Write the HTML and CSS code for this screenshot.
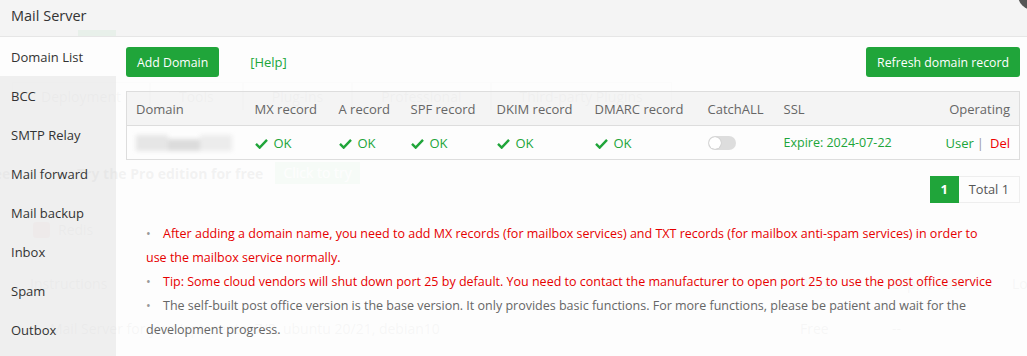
FILE: index.html
```html
<!DOCTYPE html>
<html lang="en">
<head>
    <meta charset="UTF-8">
    <meta name="viewport" content="width=device-width, initial-scale=1.0">
    <title>Mail Server</title>
    <link rel="stylesheet" href="styles.css">
</head>
<body>
    <div class="page">
        <div class="page-top">
            <span class="search-btn">
                <svg width="18" height="18" viewBox="0 0 18 18"><circle cx="8" cy="8" r="5.5" fill="none" stroke="#fff" stroke-width="1.6"/><path d="M12 12l4 4" stroke="#fff" stroke-width="1.6"/></svg>
            </span>
        </div>
        <div class="tabs">
            <span class="tab tab-first">Deployment</span>
            <span class="tab">Tools</span>
            <span class="tab">Plug-ins</span>
            <span class="tab">Professional</span>
            <span class="tab">Third-party Plugins</span>
        </div>
        <div class="promo">
            <span class="promo-pre">free</span>
            <b>Try the Pro edition for free</b>
            <span class="try-btn">Click to try</span>
        </div>
        <div class="soft"><span class="redis-icon"></span>Redis</div>
        <div class="soft-head">
            <span class="c-name">Instructions</span>
            <span class="c-price">Price</span>
            <span class="c-exp">Expire date</span>
            <span>Location</span>
        </div>
        <div class="soft-row">
            <span class="c-name c-desc">Mail Server for yum/apt, centos7/8, ubuntu 20/21, debian10</span>
            <span class="c-price">Free</span>
            <span class="c-exp">--</span>
        </div>
    </div>

    <div class="layer">
        <div class="layer-title">Mail Server</div>
        <div class="layer-body">
            <ul class="menu">
                <li class="active">Domain List</li>
                <li>BCC</li>
                <li>SMTP Relay</li>
                <li>Mail forward</li>
                <li>Mail backup</li>
                <li>Inbox</li>
                <li>Spam</li>
                <li>Outbox</li>
            </ul>
            <div class="content">
                <div class="toolbar">
                    <button class="btn">Add Domain</button>
                    <a href="#" class="help">[Help]</a>
                    <button class="btn btn-right">Refresh domain record</button>
                </div>
                <table class="domain-table">
                    <colgroup>
                        <col style="width:119px">
                        <col style="width:84px">
                        <col style="width:72px">
                        <col style="width:86px">
                        <col style="width:98px">
                        <col style="width:113px">
                        <col style="width:76px">
                        <col>
                        <col style="width:90px">
                    </colgroup>
                    <thead>
                        <tr>
                            <th>Domain</th>
                            <th>MX record</th>
                            <th>A record</th>
                            <th>SPF record</th>
                            <th>DKIM record</th>
                            <th>DMARC record</th>
                            <th>CatchALL</th>
                            <th>SSL</th>
                            <th class="right">Operating</th>
                        </tr>
                    </thead>
                    <tbody>
                        <tr>
                            <td><span class="blur-name"><span></span><span></span><span></span></span></td>
                            <td class="ok"><svg class="check" viewBox="0 0 14 12"><path d="M1 6.5l4 4L13 2"/></svg>OK</td>
                            <td class="ok"><svg class="check" viewBox="0 0 14 12"><path d="M1 6.5l4 4L13 2"/></svg>OK</td>
                            <td class="ok"><svg class="check" viewBox="0 0 14 12"><path d="M1 6.5l4 4L13 2"/></svg>OK</td>
                            <td class="ok"><svg class="check" viewBox="0 0 14 12"><path d="M1 6.5l4 4L13 2"/></svg>OK</td>
                            <td class="ok"><svg class="check" viewBox="0 0 14 12"><path d="M1 6.5l4 4L13 2"/></svg>OK</td>
                            <td><span class="switch"><span class="knob"></span></span></td>
                            <td class="ok ssl">Expire: 2024-07-22</td>
                            <td class="right"><a href="#" class="link-ok">User</a><span class="sep">|</span><a href="#" class="link-del">Del</a></td>
                        </tr>
                    </tbody>
                </table>
                <div class="pager">
                    <span class="pager-cur">1</span>
                    <span class="pager-total">Total 1</span>
                </div>
                <ul class="tips">
                    <li class="red">After adding a domain name, you need to add MX records (for mailbox services) and TXT records (for mailbox anti-spam services) in order to use the mailbox service normally.</li>
                    <li class="red">Tip: Some cloud vendors will shut down port 25 by default. You need to contact the manufacturer to open port 25 to use the post office service</li>
                    <li>The self-built post office version is the base version. It only provides basic functions. For more functions, please be patient and wait for the development progress.</li>
                </ul>
            </div>
        </div>
        <span class="layer-close"></span>
    </div>
</body>
</html>
```

FILE: styles.css
```css
body {
    margin: 0;
    width: 1027px;
    height: 356px;
    overflow: hidden;
    position: relative;
    font-family: "Open Sans", "Noto Sans", sans-serif;
    font-size: 13px;
    color: #333;
    background: #fff;
}

/* page behind the dialog */
.page {
    color: #555;
    font-size: 14px;
}
.page-top {
    height: 30px;
    padding-left: 78px;
}
.search-btn {
    display: flex;
    align-items: center;
    justify-content: center;
    width: 38px;
    height: 30px;
    margin-top: 30px;
    background: #20a53a;
}
.tabs {
    display: flex;
    margin-top: 22px;
    height: 28px;
    line-height: 28px;
}
.tab {
    padding: 0 28px;
    border: 1px solid #ddd;
    border-bottom: none;
    color: #aaa;
}
.tab-first {
    margin-left: 12px;
    color: #888;
}
.promo {
    display: flex;
    align-items: center;
    margin-top: 52px;
    height: 22px;
}
.promo-pre {
    margin-left: -18px;
    width: 95px;
    font-weight: bold;
}
.promo b {
    color: #444;
}
.try-btn {
    margin-left: 12px;
    padding: 0 8px;
    line-height: 22px;
    background: #8fd19b;
    color: #fff;
}
.soft {
    display: flex;
    align-items: center;
    margin-top: 36px;
    padding-left: 33px;
    color: #888;
}
.redis-icon {
    width: 17px;
    height: 16px;
    margin-right: 8px;
    background: #d98a87;
    border-radius: 3px;
}
.soft-head, .soft-row {
    display: flex;
    height: 45px;
    line-height: 45px;
    color: #888;
}
.soft-head {
    margin-top: 22px;
}
.soft-head span, .soft-row span {
    flex-shrink: 0;
}
.c-name {
    width: 770px;
    padding-left: 30px;
}
.c-desc {
    width: 750px;
    padding-left: 50px;
}
.c-price {
    width: 92px;
}
.c-exp {
    width: 120px;
}

/* dialog */
.layer {
    position: absolute;
    inset: 0;
    display: flex;
    flex-direction: column;
}
.layer-title {
    flex-shrink: 0;
    height: 36px;
    line-height: 32px;
    padding-left: 11px;
    font-size: 14.5px;
    color: #333;
    background: rgba(243, 243, 243, 0.95);
    border-bottom: 1px solid #e6e6e6;
}
.layer-body {
    flex: 1;
    display: flex;
    overflow: hidden;
}
.menu {
    flex-shrink: 0;
    width: 116px;
    margin: 0;
    padding: 0;
    list-style: none;
    background: rgba(238, 238, 238, 0.96);
}
.menu li {
    height: 39px;
    line-height: 41px;
    padding-left: 11px;
    color: #333;
}
.menu li.active {
    background: rgba(253, 253, 253, 0.97);
}
.content {
    flex: 1;
    padding: 10px 7px 0 10px;
    background: rgba(253, 253, 253, 0.94);
}
.toolbar {
    display: flex;
    align-items: center;
}
.btn {
    height: 30px;
    padding: 0 11px;
    border: none;
    border-radius: 3px;
    background: #20a53a;
    color: #fff;
    font-family: inherit;
    font-size: 12.3px;
    cursor: pointer;
}
.btn-right {
    margin-left: auto;
}
.help {
    margin-left: 31px;
    color: #20a53a;
    text-decoration: none;
}

.domain-table {
    width: 100%;
    margin-top: 14px;
    border-collapse: collapse;
    table-layout: fixed;
    border: 1px solid #ddd;
}
.domain-table th, .domain-table td {
    height: 33px;
    padding: 0 9px;
    text-align: left;
    font-weight: normal;
    color: #666;
    white-space: nowrap;
}
.domain-table th {
    background: rgba(0, 0, 0, 0.035);
    border-bottom: 1px solid #ddd;
}
.domain-table .right {
    text-align: right;
}
.domain-table td.ok {
    color: #20a53a;
}
.domain-table td.ssl {
    font-size: 12.5px;
}
.check {
    width: 13px;
    height: 11px;
    margin-right: 6px;
    vertical-align: -1px;
    fill: none;
    stroke: #20a53a;
    stroke-width: 2.6;
}
.blur-name {
    display: flex;
    width: 96px;
    height: 16px;
    filter: blur(2px);
}
.blur-name span {
    flex: 1;
    background: #e6e6e6;
}
.blur-name span:nth-child(2) {
    background: #dcdcdc;
    margin-top: 4px;
}
.blur-name span:nth-child(3) {
    background: #ececec;
}
.switch {
    position: relative;
    display: inline-block;
    width: 28px;
    height: 14px;
    margin-top: 4px;
    border-radius: 7px;
    background: #ddd;
}
.knob {
    position: absolute;
    left: 1px;
    top: 1px;
    width: 12px;
    height: 12px;
    border-radius: 50%;
    background: #fff;
    box-shadow: 0 0 1px rgba(0, 0, 0, 0.3);
}
.link-ok {
    color: #20a53a;
    text-decoration: none;
}
.link-del {
    color: #e00;
    text-decoration: none;
}
.sep {
    margin: 0 6px 0 3px;
    color: #999;
}

.pager {
    display: flex;
    justify-content: flex-end;
    margin-top: 16px;
    height: 27px;
    line-height: 27px;
}
.pager-cur {
    width: 29px;
    text-align: center;
    background: #20a53a;
    color: #fff;
    font-weight: bold;
}
.pager-total {
    padding: 0 10px;
    border: 1px solid #eee;
    border-left: none;
    line-height: 25px;
    color: #555;
    font-size: 12.8px;
}

.tips {
    margin: 19px 0 0;
    padding: 0 20px 0 20px;
    list-style: none;
    line-height: 24px;
    font-size: 12.5px;
    color: #666;
}
.tips li::before {
    content: "\2022";
    display: inline-block;
    width: 17px;
    color: #999;
}
.tips li.red {
    color: #e60000;
}

.layer-close {
    position: absolute;
    right: -21px;
    top: -20px;
    width: 30px;
    height: 30px;
    border-radius: 50%;
    background: #555;
}
```
